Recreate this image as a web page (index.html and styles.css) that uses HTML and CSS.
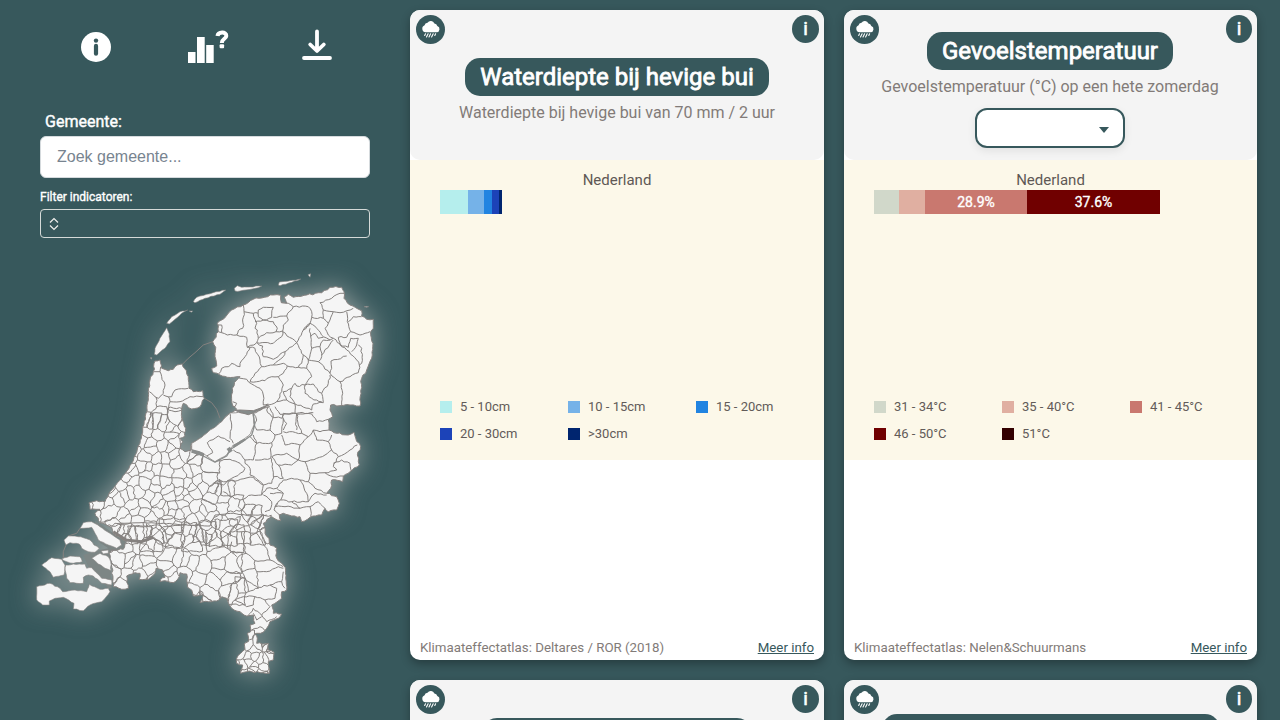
FILE: index.html
```html
<!DOCTYPE html>
<html lang="nl">
<head>
<meta charset="utf-8">
<title>Klimaateffecten per gemeente</title>
<link rel="stylesheet" href="styles.css">
</head>
<body>
<svg width="0" height="0" class="defs">
  <symbol id="rain" viewBox="0 0 29 29">
    <circle cx="14.5" cy="14.5" r="14.5" fill="#37585c"/>
    <path fill="#fff" d="M9.600 17.300a3.700 3.700 0 0 1-1-7.100 2.900 2.900 0 0 1 2.900-2.500 4 4 0 0 1 6.900.8 3.200 3.200 0 0 1 2.900 2.400 3.300 3.300 0 0 1-.8 6.400z"/>
    <path stroke="#fff" stroke-width="1.100" stroke-linecap="round" d="M9.500 18.700l-.8 1.700M12.100 18.700l-1.600 3.300M14.600 18.700l-1.600 3.300M17.200 18.700l-1.600 3.300M19.600 18.700l-.8 1.700"/>
  </symbol>
</svg>
<div class="app">
  <aside class="side">
    <nav class="tools">
      <svg class="tool" width="30" height="30" viewBox="0 0 30 30"><circle cx="15" cy="15" r="15" fill="#fff"/><circle cx="15" cy="8.600" r="2.200" fill="#37585c"/><rect x="12.900" y="11.800" width="4.200" height="12" rx="2.100" fill="#37585c"/></svg>
      <svg class="tool chart" width="42" height="34" viewBox="0 0 42 34"><path fill="#fff" d="M0 22h7.500v11H0zM9 7h7.700v26H9zM18.200 15h7.500v18h-7.500z"/><path fill="none" stroke="#fff" stroke-width="4" d="M29.500 6C30 1.700 38.500 1.200 38.300 5.800 38.200 9 33.800 8.700 33.800 13"/><rect x="31.600" y="14.300" width="4.500" height="4" rx="1" fill="#fff"/></svg>
      <svg class="tool" width="30" height="32" viewBox="0 0 30 32"><path fill="none" stroke="#fff" stroke-width="3.800" stroke-linecap="round" stroke-linejoin="round" d="M15 2.500v19M8.200 15.500l6.800 6.500 6.800-6.500M2 29h26"/></svg>
    </nav>
    <label class="label">Gemeente:</label>
    <div class="search">Zoek gemeente...</div>
    <label class="filter-label">Filter indicatoren:</label>
    <div class="filter"><svg width="10" height="14" viewBox="0 0 10 14"><path d="M1 5.500L5 1.500l4 4M1 8.500l4 4 4-4" fill="none" stroke="#f0f0ee" stroke-width="1.200"/></svg></div>
    <svg class="map" id="map" viewBox="0 260 400 440" width="400" height="440"></svg>
  </aside>
  <main class="cards">
    <section class="card">
      <header class="head">
        <svg class="rain"><use href="#rain"/></svg><span class="info">i</span>
        <h2 class="title">Waterdiepte bij hevige bui</h2>
        <p class="desc">Waterdiepte bij hevige bui van 70 mm / 2 uur</p>
      </header>
      <div class="chart-area">
        <div class="region">Nederland</div>
        <div class="bar"><i class="c1" style="width:28px"></i><i class="c2" style="width:16px"></i><i class="c3" style="width:8px"></i><i class="c4" style="width:7px"></i><i class="c5" style="width:2.500px"></i></div>
        <ul class="legend"><li><i class="c1"></i>5 - 10cm</li><li><i class="c2"></i>10 - 15cm</li><li><i class="c3"></i>15 - 20cm</li><li><i class="c4"></i>20 - 30cm</li><li><i class="c5"></i>&gt;30cm</li></ul>
      </div>
      <footer class="foot"><span>Klimaateffectatlas: Deltares / ROR (2018)</span><a>Meer info</a></footer>
    </section>
    <section class="card">
      <header class="head with-select">
        <svg class="rain"><use href="#rain"/></svg><span class="info narrow">i</span>
        <h2 class="title">Gevoelstemperatuur</h2>
        <p class="desc">Gevoelstemperatuur (°C) op een hete zomerdag</p>
        <div class="select"><span class="caret"></span></div>
      </header>
      <div class="chart-area">
        <div class="region">Nederland</div>
        <div class="bar"><i class="h1" style="width:25px"></i><i class="h2" style="width:26px"></i><i class="h3" style="width:102px">28.9%</i><i class="h4" style="width:133px">37.6%</i></div>
        <ul class="legend"><li><i class="h1"></i>31 - 34°C</li><li><i class="h2"></i>35 - 40°C</li><li><i class="h3"></i>41 - 45°C</li><li><i class="h4"></i>46 - 50°C</li><li><i class="h5"></i>51°C</li></ul>
      </div>
      <footer class="foot"><span>Klimaateffectatlas: Nelen&amp;Schuurmans</span><a>Meer info</a></footer>
    </section>
    <section class="card">
      <header class="head next-a"><svg class="rain"><use href="#rain"/></svg><span class="info">i</span><h2 class="title"></h2></header>
    </section>
    <section class="card">
      <header class="head next-b"><svg class="rain"><use href="#rain"/></svg><span class="info narrow">i</span><h2 class="title"></h2></header>
    </section>
  </main>
</div>
<script src="map.js"></script>
</body>
</html>
```
FILE: styles.css
```css
* { box-sizing: border-box; }
body { margin: 0; height: 720px; overflow: hidden; background: #37585c; font-family: Roboto, "Liberation Sans", sans-serif; }
.defs { position: absolute; }
.app { display: flex; height: 720px; overflow: hidden; }
.side { width: 410px; display: flex; flex-direction: column; color: #fff; }
.tools { display: flex; height: 110px; padding: 30px 78px 0 81px; justify-content: space-between; align-items: flex-start; }
.tool { margin-top: 2px; }
.tool:last-child { margin-top: -1px; }
.tool.chart { margin: 0 0 0 5px; }
.label { padding-left: 45px; font-size: 16px; line-height: 24px; height: 26px; -webkit-text-stroke: .4px #fff; }
.search { margin: 0 40px; width: 330px; height: 42px; border: 1px solid #d5dadd; border-radius: 6px; background: #fff; color: #788490; padding: 0 16px; font: 16px/40px "Liberation Sans", sans-serif; }
.filter-label { margin: 10px 0 0 40px; font-size: 12px; line-height: 18px; height: 21px; -webkit-text-stroke: .35px #fff; }
.filter { margin-left: 40px; width: 330px; height: 29px; border: 1px solid #d5dad8; border-radius: 4px; display: flex; align-items: center; padding-left: 8px; }
.map { flex: none; margin-top: 22px; }
.land { filter: drop-shadow(0 0 13px rgba(245, 232, 225, .5)); }
.cards { width: 847px; display: grid; grid-template-columns: 414px 413px; gap: 20px; padding-top: 10px; align-content: start; }
.card { height: 650px; background: #fff; border-radius: 10px; box-shadow: 0 4px 10px rgba(0, 0, 0, .3); display: flex; flex-direction: column; }
.head { position: relative; flex: none; height: 150px; border-radius: 10px; background: #f4f4f4; display: flex; flex-direction: column; align-items: center; padding-top: 48px; }
.with-select { padding-top: 22px; padding-right: 1px; }
.rain { position: absolute; left: 6px; top: 5px; width: 29px; height: 29px; }
.info { position: absolute; right: 5px; top: 5px; width: 27px; height: 28px; border-radius: 50%; background: #37585c; color: #fff; font-size: 19px; line-height: 28px; -webkit-text-stroke: .6px #fff; text-align: center; }
.narrow { width: 26px; }
.title { margin: 0; height: 38px; min-width: 20px; padding: 0 15px; border-radius: 15px; background: #37585c; color: #fff; font-size: 24px; line-height: 38px; font-weight: 400; -webkit-text-stroke: .8px #fff; white-space: nowrap; }
.desc { margin: 5px 0 0; color: #827b78; font-size: 16px; line-height: 24px; white-space: nowrap; }
.select { margin-top: 9px; width: 150px; height: 40px; border: 2px solid #37585c; border-radius: 12px; background: #fff; display: flex; align-items: center; justify-content: flex-end; padding: 3px 14px 0 0; box-shadow: 0 3px 8px rgba(0, 0, 0, .08); }
.caret { border: 5px solid transparent; border-top: 6px solid #37585c; border-bottom: 0; }
.next-a { padding-top: 38px; }
.next-a .title { width: 270px; }
.next-b { padding-top: 34px; }
.next-b .title { width: 338px; }
.chart-area { height: 300px; background: #fcf8e9; padding: 10px 30px 0; flex: none; }
.region { height: 20px; line-height: 20px; text-align: center; font-size: 15px; color: #5f5855; }
.bar { display: flex; height: 24px; }
.bar i { font: 400 14px/24px Roboto, sans-serif; -webkit-text-stroke: .35px #fff; color: #fff; text-align: center; }
.legend { list-style: none; margin: 179px 0 0; padding: 0; display: grid; grid-template-columns: repeat(3, 128px); grid-auto-rows: 27px; width: 384px; }
.legend li { display: flex; align-items: center; gap: 8px; font-size: 13px; color: #625b58; }
.legend i { width: 12px; height: 12px; }
.c1 { background: #b5eeed; } .c2 { background: #75b2e8; } .c3 { background: #2184e1; } .c4 { background: #1c43b8; } .c5 { background: #00256f; }
.h1 { background: #d1d8ca; } .h2 { background: #e0afa1; } .h3 { background: #c9786f; } .h4 { background: #700000; } .h5 { background: #330000; }
.foot { margin-top: auto; display: flex; justify-content: space-between; padding: 0 10px; height: 25px; line-height: 25px; font-size: 13.3px; color: #827b78; }
.foot a { color: #37585c; text-decoration: underline; }
```
FILE: map.js
```js
// Border data is stored per map sheet at three units per pixel; each sheet has its own origin.
const ORIGIN = { N: [140, 260], M: [70, 400], S: [20, 490], T: [120, 500] };
const read = (sheet, text) => text.trim().split(/\s+/).map(p => {
  const [x, y] = p.split(',').map(Number), o = ORIGIN[sheet];
  return [o[0] + x / 3, o[1] + y / 3];
});
const rnd = (a, b) => { const v = Math.sin(a * 12.9898 + b * 78.233) * 43758.5453; return v - Math.floor(v) - 0.5; };

// Break a straight line into an irregular one.
function rough(pts, amount) {
  const out = [pts[0]];
  for (let i = 1; i < pts.length; i++) {
    const [ax, ay] = pts[i - 1], [bx, by] = pts[i];
    const len = Math.hypot(bx - ax, by - ay), n = Math.max(1, Math.round(len / 3));
    for (let k = 1; k < n; k++) {
      const t = k / n, x = ax + (bx - ax) * t, y = ay + (by - ay) * t, d = rnd(x, y) * amount;
      out.push([x - (by - ay) / len * d, y + (bx - ax) / len * d]);
    }
    out.push([bx, by]);
  }
  return out;
}
const line = pts => 'M' + pts.map(p => p[0].toFixed(1) + ' ' + p[1].toFixed(1)).join('L');

const mainland = [
  ...read('N', '45,303 60,300 65,325 85,332 100,328 112,315 127,312 133,325 145,350 147,385 160,395 188,392 193,415 180,440 155,447 130,430 125,450 127,475'),
  ...read('M', '335,52 347,85 345,108 330,115 338,125 330,145 345,155 363,150 365,130 395,112 415,95 455,65 480,40'),
  ...read('N', '280,455 290,448 278,438 275,425 277,385 290,360 300,350 262,352 240,345 220,338 215,325 230,318 225,290 227,262 218,245 235,215 232,190 245,180 275,150 310,135 340,118 400,105 422,106 424,128 440,130 432,110 445,103 460,112 500,105 545,98 570,82 605,82 612,95 612,115 630,135 665,152 665,168 680,178 700,178 700,205 692,215 698,260 697,285 680,330 665,355 660,438 630,435 600,437 572,435 570,450 578,470 565,478 567,500'),
  ...read('M', '777,90 800,100 835,105 852,97 857,115 872,140 862,165 868,195 840,215 820,228 818,245 785,240 782,265 770,280 800,290 808,310 800,330 775,335 765,325 755,345 720,352 695,365 690,350 665,348 640,340 628,345 632,362 612,355 605,350 580,370 585,400 597,415 600,435 620,445'),
  ...read('S', '768,180 770,205 790,225 797,240 797,265 800,300 785,305 785,325 755,345 760,370 785,372 775,385 750,395 740,415 722,430 710,430 704,432 712,445 710,460 745,460 745,480 762,487 760,510 745,515 748,550 720,548 695,545 680,545 662,550 668,525 650,520 650,505 662,490 675,478 673,462 685,455 682,430 692,425 690,405 705,400 700,375 680,378 660,365 635,355 628,345 620,325 605,320 590,333 565,335 540,338 550,315 530,318 520,318 515,300 503,292 500,270 500,252 480,248 478,260 460,278 435,272 420,275 422,268 435,262 428,240 408,235 405,250 385,268 357,268 360,250 345,248 320,258 325,295 305,298 280,290 278,275 275,215 268,190 275,180 310,178 320,155 310,150 280,130 275,112 240,98 225,70 240,58 228,58 210,58 207,38 230,32 255,35 270,5'),
  ...read('M', '125,270 155,235 185,190 210,130 218,90 228,40 235,0'),
  ...read('N', '25,395 30,360 40,335')
];
const islands = [
  ['S', '180,115 190,98 215,95 240,110 270,130 300,150 305,165 290,175 265,165 235,150 225,130 215,112 190,115'],
  ['S', '132,150 145,138 175,140 190,143 210,150 222,165 238,175 225,187 205,185 185,175 178,162 150,158 138,165'],
  ['S', '125,207 150,198 180,200 187,215 160,220 140,215'],
  ['S', '215,205 240,190 265,200 272,215 273,242 255,235 235,222'],
  ['S', '65,225 95,203 125,208 135,225 132,255 100,262 90,245'],
  ['S', '135,240 137,225 160,222 195,222 200,235 215,233 245,265 275,270 275,285 245,280 220,258 205,255 190,262 190,280 150,278 140,265'],
  ['S', '50,290 90,280 120,295 128,305 165,300 200,305 208,283 240,298 265,295 270,305 245,335 210,345 190,362 160,357 162,340 130,322 105,325 88,333 88,345 68,345 50,330'],
  ['S', '243,183 265,180 265,190 250,192'],
  ['N', '45,265 60,235 80,203 88,222 90,245 75,265 50,285 43,283'],
  ['N', '80,190 95,170 120,155 143,150 125,160 105,178 88,192'],
  ['N', '148,153 158,153 154,157'],
  ['N', '160,125 170,112 200,103 257,90 240,103 195,115 165,128'],
  ['N', '283,85 292,77 305,82 365,78 355,83 300,93 285,93'],
  ['N', '415,75 418,66 450,62 482,57 455,67 420,77'],
  ['N', '504,44 512,41 510,52'],
  ['N', '31,293 36,293 34,298'],
  ['N', '672,140 686,140 680,142']
].map(a => read(...a));

const borders = {
  N: ['310,135 312,155 308,205 295,212 290,225 262,225 245,218 235,215','290,225 320,232 322,262 350,248','312,155 340,160 345,178 350,190 345,205 352,210 355,235 350,248','355,150 370,142 400,142 395,172 370,180 355,170 355,150','340,160 355,160','232,195 245,195 245,218','370,180 400,185 412,205 408,215 380,218 355,235','345,185 370,180','400,172 440,168 445,180 430,195 428,213 408,215','427,128 445,130 460,140 440,168','460,140 505,140 515,155 510,190 490,210 475,240 470,248 428,215','350,248 400,250 425,230 428,213','352,250 368,258 370,290 400,298 435,275 470,248','322,262 345,265 360,300 365,320','330,262 315,290 300,310 300,320 275,310 265,320 245,325 235,343','330,365 345,340 365,320 400,315 430,310 442,318 430,340 415,350 395,350 375,362 350,365 330,365','400,315 430,290 435,275','470,248 478,265 490,285 485,310 475,322 442,318','290,352 320,358 335,372 360,385 370,405 370,435 385,432','415,350 430,375 425,395 410,425 385,435','490,285 505,300 500,325 475,322','500,325 515,350 495,375 470,378 465,370 455,385 430,395','490,210 510,190 530,205 550,230 570,240','510,205 512,230 525,220 535,235 550,232','512,230 515,265 505,300','515,265 540,260 550,240 570,240','540,260 545,290 535,305 505,300','545,285 580,240','570,240 580,235 620,270 650,300 658,315','535,305 570,340 600,365','573,303 620,288','573,303 575,325 570,340','600,365 630,350 655,338 658,315','600,365 608,400 605,435','570,345 565,370 545,400 550,428','495,375 495,400 515,415 545,425','495,375 520,372 535,395 545,400','612,100 600,100 575,115 540,128 550,150 580,155 600,158 620,152 640,145','550,150 550,175 515,172','550,175 565,190 555,205 565,225 580,235','580,155 570,180 565,190','620,155 622,185 632,215 620,232 595,232 600,255 625,262','625,185 640,170 665,170','632,215 660,225 690,215','625,262 632,235 655,235 650,255 635,275','655,255 665,265 665,310 658,315','410,425 440,420 465,432 465,460 420,463 405,440','430,395 440,420','455,385 450,410 465,432','465,432 515,450 520,432 550,428','465,460 515,462 530,485 565,478','278,425 290,430 285,440 278,438','42,335 60,335 62,320','28,395 48,412 55,415 70,400 75,375 65,350 60,335','70,405 95,410 105,390 145,385','48,412 50,440 30,465','50,440 80,440 85,455 75,490','85,410 90,425 120,425 150,410 190,410','90,425 85,450 105,455 125,450','340,460 350,480 340,505','385,435 380,450 395,470 425,475 430,465','430,475 440,490 430,510','470,460 468,485 470,510'],
  M: ['550,40 580,25 600,20','600,25 610,50 600,90 560,90 552,75','600,90 615,105 635,100 640,60 640,40 680,40 730,38','680,40 685,75 695,100 640,95','550,105 560,130 605,128 615,105','605,128 602,175 555,180','540,110 560,130 550,180 525,180 510,160 490,150','605,175 610,225 605,250 580,255 555,232 540,225 540,205 525,190 525,180','475,245 550,232 580,255 575,285 545,285 510,300 480,290 475,245','435,185 480,178 510,190 525,205 520,215 485,235 460,255 430,250','605,170 625,195 640,235 612,230','605,170 615,165 650,160 685,180 665,195 625,195','635,105 645,135 665,130 690,135 685,180 705,185','695,100 715,110 730,90 750,95 777,90','690,135 715,110','730,90 740,120 775,125 785,105','775,125 785,150 765,165 740,175 705,185','785,150 805,170 840,150 862,135','805,170 790,200 800,210 765,218 720,220 705,185','790,190 815,180 840,190 845,215','765,218 790,230 820,228','720,220 715,245 690,240 665,235 640,240','715,245 735,265 770,280','640,240 620,265 640,280 632,300 665,305 715,305 710,280 690,240','715,305 735,280 770,285','665,305 690,325 720,320 745,305 765,325','632,300 615,320 645,320 690,325','720,320 722,350','575,285 590,265 620,265','580,285 600,300 605,305 600,330 585,335','600,280 640,280','620,310 612,330 630,345','480,290 460,275','510,300 505,320 530,345 590,345'],
  T: ['365,95 410,100 440,145 450,180 405,182 378,160 365,95','450,180 490,200','355,170 378,160','355,170 350,185 365,215 405,205 405,182','405,205 410,215 440,215 475,200 490,205','365,215 375,235 415,265 410,215','415,262 450,255 485,245','490,215 485,245 495,265','375,235 345,230 355,280 385,275 375,235','385,275 415,265','355,280 345,300 370,290 405,290 435,300 465,295 470,265 450,255','405,290 400,315 380,320 345,300 330,320','435,300 450,320 425,345 400,325 385,345','425,345 440,365 470,350','400,340 410,360 425,350','365,95 330,95 330,110','410,100 420,70 400,50','350,170 330,150 335,125','395,390 420,380 440,395'],
  S: ['210,285 208,320 212,345','120,295 125,320 162,340','100,225 115,240 135,238','103,225 132,225','95,250 115,240','195,235 205,240 210,255','140,240 190,245 200,232','380,100 380,145']
};

// Cells for the densely divided areas, built from evenly scattered seeds.
function cells(poly, step) {
  const inside = (x, y) => {
    let hit = false;
    for (let i = 0, j = poly.length - 1; i < poly.length; j = i++) {
      const [xi, yi] = poly[i], [xj, yj] = poly[j];
      if ((yi > y) !== (yj > y) && x < (xj - xi) * (y - yi) / (yj - yi) + xi) hit = !hit;
    }
    return hit;
  };
  const seeds = [];
  for (let y = 360; y < 690; y += step * 0.86)
    for (let x = 80; x < 290; x += step * 1.1) {
      const px = x + rnd(x, y) * step * 1.25, py = y + rnd(y, x) * step * 1.25;
      if (inside(px, py)) seeds.push([px, py]);
    }
  const seen = new Set();
  let d = '';
  seeds.forEach(([x, y]) => {
    const r = step * 1.1;
    let cell = [[x - r, y - r], [x + r, y - r], [x + r, y + r], [x - r, y + r]];
    for (const [sx, sy] of seeds) {
      if ((sx === x && sy === y) || Math.hypot(sx - x, sy - y) > step * 4) continue;
      const side = p => (p[0] - (x + sx) / 2) * (sx - x) + (p[1] - (y + sy) / 2) * (sy - y);
      const next = [];
      cell.forEach((p, i) => {
        const q = cell[(i + 1) % cell.length], a = side(p), b = side(q);
        if (a <= 0) next.push(p);
        if ((a < 0 && b > 0) || (a > 0 && b < 0)) {
          const t = a / (a - b);
          next.push([p[0] + (q[0] - p[0]) * t, p[1] + (q[1] - p[1]) * t]);
        }
      });
      cell = next;
    }
    cell.forEach((p, i) => {
      const ends = [p, cell[(i + 1) % cell.length]].sort((a, b) => a[0] - b[0]);
      const key = ends.flatMap(e => [e[0].toFixed(1), e[1].toFixed(1)]).join();
      if (seen.has(key) || Math.hypot(ends[0][0] - ends[1][0], ends[0][1] - ends[1][1]) < 0.4) return;
      seen.add(key);
      d += line(rough(ends, 2.4));
    });
  });
  return d;
}

const west = read('M', '215,60 235,45 350,55 350,140 440,185 430,250 478,250 485,290 505,330 590,350 590,410 540,420 240,425 130,380 60,310');
const south = read('S', '270,130 380,150 420,120 650,120 655,170 665,230 640,240 655,290 625,330 530,340 430,285 270,300');
const limburg = read('S', '645,435 770,435 770,560 645,560');

const coast = line(rough([...mainland, mainland[0]], 1.6)) + 'Z';
const isles = islands.map(p => line(rough([...p, p[0]], 0.9)) + 'Z').join('');
const traced = Object.entries(borders).map(([s, list]) => list.map(t => line(rough(read(s, t), 1.7))).join('')).join('');
const flevo = line(rough(read('M', '365,130 395,112 415,95 455,65 480,38 548,38 552,75 542,100 520,120 490,135 470,165 435,185 400,160 365,150'), .8)) + 'Z';
const flevoLines = ['480,40 485,75 480,115 490,130', '480,125 445,108 412,128 428,158 410,168'].map(t => line(rough(read('M', t), 1.2))).join('');
const wet = line(read('M', '365,155 400,168 435,187 470,168 482,148 515,127 545,105 554,75 550,40'));
const ketel = line(read('N', '285,451 300,450 340,452 360,445 385,434 375,442 340,458 325,464 300,457')) + 'Z';
const delta = line(read('S', '225,92 280,130 320,150 365,152 395,142 365,160 325,162 310,180 275,182 272,265 275,295 265,295 205,230 190,195 240,180 265,175 240,158')) + 'Z';
const rivers = ['275,110 285,100 375,98 430,100 500,105 570,108', '380,143 400,138 430,110 500,103', '570,108 585,75 640,70 700,80'].map(t => line(rough(read('S', t), .8))).join('');
const dikes = line(read('N', '128,312 145,295 165,278 190,255 218,245')) + line(read('N', '193,415 215,428 230,448 240,475')) + line(read('S', '180,115 170,130 145,138')) + line(read('S', '138,165 130,185 130,205'));

document.getElementById('map').innerHTML = `
<defs><clipPath id="shape"><path d="${coast}"/></clipPath></defs>
<g class="land" stroke="#85817f" stroke-width="1" stroke-linejoin="round" fill="none">
  <path d="${delta}" fill="#7d8685" stroke="none"/>
  <path d="${dikes}" stroke-width="1"/>
  <path d="${coast}" fill="#f5f5f5"/>
  <path d="${isles}" fill="#f5f5f5" stroke-width=".6"/>
  <g clip-path="url(#shape)">
    <path d="${cells(west, 9.8)}${cells(south, 12.5)}${cells(limburg, 8)}${traced}"/>
    <path d="${rivers}"/>
    <path d="${line(read('S', '280,125 318,150 365,155 400,142'))}" stroke-width="3"/>
  </g>
  <path d="${flevo}" fill="#f5f5f5" stroke-width=".8"/>
  <path d="${flevoLines}"/>
  <path d="${wet}" stroke="#8a8d8c" stroke-width="1.300"/>
  <path d="${line(read('M', '365,153 385,158 400,165'))}" stroke="#8a8d8c" stroke-width="3.500"/>
  <path d="${line(read('M', '474,153 484,146'))}" stroke="#8a8d8c" stroke-width="5"/>
  <path d="${line(read('M', '490,140 525,118'))}" stroke="#8a8d8c" stroke-width="2.500"/>
  <path d="${ketel}" fill="#858b8a"/>
</g>`;
```
